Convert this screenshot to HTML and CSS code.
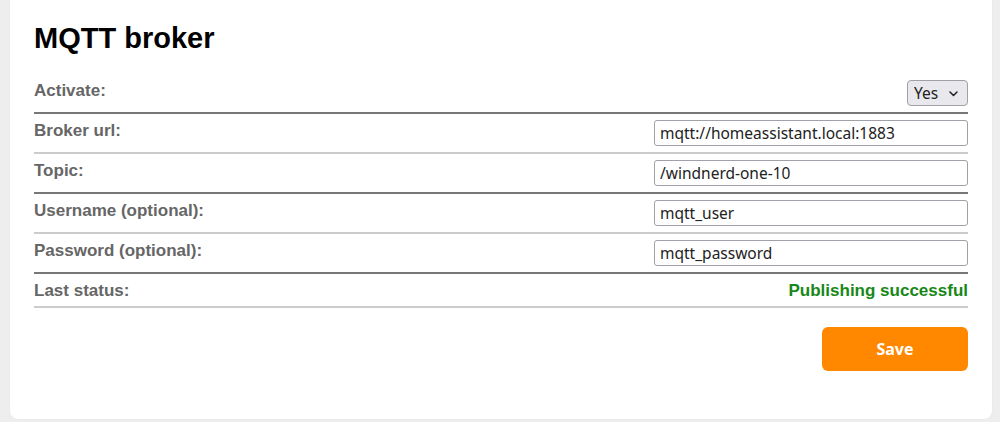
FILE: index.html
```html
<!DOCTYPE html>
<html lang="en">
<head>
<meta charset="utf-8">
<title>MQTT broker</title>
<link rel="stylesheet" href="styles.css">
</head>
<body>
<div class="page">
  <section class="card">
    <h2 class="title">MQTT broker</h2>
    <div class="rows">
      <div class="row row-dark">
        <label class="label" for="activate">Activate:</label>
        <div class="select-wrap">
          <select id="activate" class="select">
            <option selected>Yes</option>
            <option>No</option>
          </select>
          <svg class="chevron" width="9" height="6" viewBox="0 0 9 6" aria-hidden="true"><path d="M1 1 L4.5 4.5 L8 1" fill="none" stroke="#222" stroke-width="1.5" stroke-linecap="round" stroke-linejoin="round"/></svg>
        </div>
      </div>
      <div class="row row-light">
        <label class="label" for="url">Broker url:</label>
        <input id="url" class="input" type="text" value="mqtt://homeassistant.local:1883">
      </div>
      <div class="row row-dark">
        <label class="label" for="topic">Topic:</label>
        <input id="topic" class="input" type="text" value="/windnerd-one-10">
      </div>
      <div class="row row-light">
        <label class="label" for="user">Username (optional):</label>
        <input id="user" class="input" type="text" value="mqtt_user">
      </div>
      <div class="row row-dark">
        <label class="label" for="pass">Password (optional):</label>
        <input id="pass" class="input" type="text" value="mqtt_password">
      </div>
      <div class="row row-light">
        <span class="label">Last status:</span>
        <span class="label status">Publishing successful</span>
      </div>
    </div>
    <div class="actions">
      <button class="save" type="button">Save</button>
    </div>
  </section>
</div>
</body>
</html>
```

FILE: styles.css
```css
html, body {
  margin: 0;
  padding: 0;
  background: #eeeeee;
}

.page {
  padding: 0 8px 3px 10px;
}

.card {
  background: #ffffff;
  border-radius: 0 0 8px 8px;
  box-shadow: 0 0 2px rgba(0, 0, 0, 0.06);
  padding: 22px 24px 48px 24px;
  font-family: "Liberation Sans", Arial, sans-serif;
}

.title {
  margin: 0 0 19px 0;
  font-size: 29px;
  font-weight: bold;
  color: #000;
  line-height: 33px;
}

.rows {
  display: flex;
  flex-direction: column;
}

.row {
  display: flex;
  justify-content: space-between;
  align-items: flex-start;
  padding: 6px 0;
}

.row-dark {
  border-bottom: 2px solid #777777;
}

.row-light {
  border-bottom: 2px solid #cccccc;
}

.label {
  font-size: 17px;
  font-weight: bold;
  color: #666666;
  line-height: 19px;
  margin-top: 1px;
}

.status {
  color: #178817;
}

.input {
  box-sizing: border-box;
  width: 314px;
  height: 26px;
  margin: 0;
  padding: 0 5px;
  border: 1px solid #a0a0a8;
  border-radius: 3px;
  background: #fff;
  color: #222;
  font-family: "Noto Sans", sans-serif;
  font-size: 15.5px;
  outline: none;
}

.select-wrap {
  position: relative;
  width: 61px;
  height: 26px;
}

.select {
  appearance: none;
  -webkit-appearance: none;
  box-sizing: border-box;
  width: 61px;
  height: 26px;
  margin: 0;
  padding: 0 0 0 6px;
  border: 1px solid #a0a0a8;
  border-radius: 4px;
  background: #e9e9ed;
  color: #222;
  font-family: "Noto Sans", sans-serif;
  font-size: 15.5px;
}

.chevron {
  position: absolute;
  right: 10px;
  top: 11px;
  pointer-events: none;
}

.actions {
  display: flex;
  justify-content: flex-end;
  margin-top: 19px;
}

.save {
  width: 146px;
  height: 44px;
  border: none;
  border-radius: 6px;
  background: #ff8800;
  color: #fff;
  font-family: "Noto Sans", sans-serif;
  font-weight: bold;
  font-size: 16px;
  cursor: pointer;
}
```
